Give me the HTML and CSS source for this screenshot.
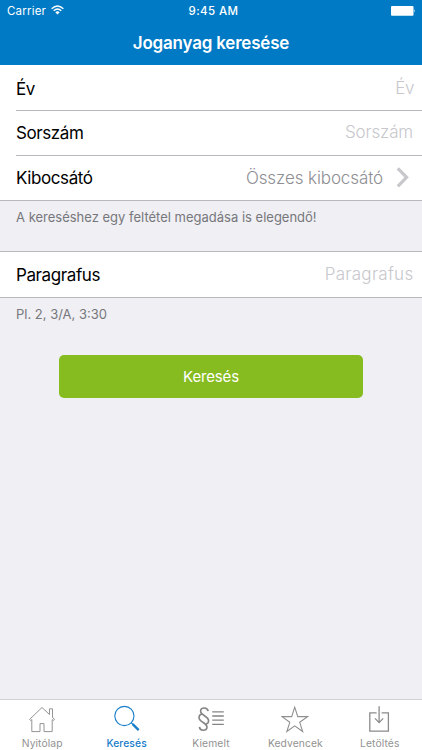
FILE: index.html
```html
<!DOCTYPE html>
<html lang="hu">
<head>
<meta charset="utf-8">
<title>Joganyag keresése</title>
<link rel="stylesheet" href="styles.css">
</head>
<body>
<header class="header">
  <div class="status">
    <div class="status-left">
      <span class="carrier">Carrier</span>
      <svg class="wifi" width="13" height="10" viewBox="0 0 13 10" fill="none" stroke="#fff" stroke-width="1.3"><path d="M.6 3.7Q6.5-1.8 12.4 3.7M2.7 5.8Q6.5 2.3 10.3 5.8"/><path d="M4.3 7.2Q6.5 5.4 8.7 7.2L6.5 9.5Z" fill="#fff" stroke="none"/></svg>
    </div>
    <span class="time">9:45 AM</span>
    <svg class="battery" width="25" height="10" viewBox="0 0 25 10" fill="#fff"><rect width="22.5" height="9.7" rx="1"/><path d="M23.2 3.2q1.5 1.6 0 3.2z"/></svg>
  </div>
  <h1 class="title">Joganyag keresése</h1>
</header>
<main class="form">
  <section class="group">
    <div class="row"><span class="label">Év</span><span class="placeholder ev-value">Év</span></div>
    <div class="row"><span class="label">Sorszám</span><span class="placeholder sor-value">Sorszám</span></div>
    <div class="row"><span class="label">Kibocsátó</span><span class="value">Összes kibocsátó</span><svg class="chevron" width="14" height="21" viewBox="0 0 14 21" fill="none" stroke="#c7c7cc" stroke-width="3.2"><path d="M1.8 1.3 10.6 10.3 1.8 19.3"/></svg></div>
  </section>
  <p class="note">A kereséshez egy feltétel megadása is elegendő!</p>
  <section class="group single">
    <div class="row"><span class="label">Paragrafus</span><span class="placeholder par-value">Paragrafus</span></div>
  </section>
  <p class="note example">Pl. 2, 3/A, 3:30</p>
  <button class="search">Keresés</button>
</main>
<nav class="tabs">
  <div class="tab"><svg width="28" height="28" viewBox="0 0 28 28" fill="none" stroke="#949494" stroke-width="1"><path d="M1.5 14.5 14 2.5l7.5 7V3.8h3v8.3l2 2.4-1.3 1-1-.9v12H16v-8h-4v8H3.8v-12l-1 .9z"/></svg><span>Nyitólap</span></div>
  <div class="tab active"><svg width="28" height="28" viewBox="0 0 28 28" fill="none" stroke="#167dca"><circle cx="11.4" cy="11" r="9.6" stroke-width="1.1"/><path d="m18.2 17.7 2 2" stroke-width="1.2"/><path d="m19.7 19.1 6 6" stroke-width="2.3"/></svg><span>Keresés</span></div>
  <div class="tab"><svg width="28" height="28" viewBox="0 0 28 28" fill="none" stroke="#858585"><path d="M11.2 6.2C10.8 4 9.3 3 7.3 3 5 3 3.6 4.4 3.6 6.2c0 4.3 8 4.8 8 9.6 0 1.8-1.1 3-2.8 3.4M2.4 22c.4 2.2 1.9 3.2 3.9 3.2 2.3 0 3.7-1.4 3.7-3.2 0-4.3-8-4.8-8-9.6 0-1.8 1.1-3 2.8-3.4" stroke-width="1.6"/><path d="M15.2 6.8h11.6M15.2 11h11.6M15.2 15.2h11.6M15.2 19.4h11.6" stroke-width="1.3"/></svg><span>Kiemelt</span></div>
  <div class="tab"><svg width="28" height="28" viewBox="0 0 28 28" fill="none" stroke="#8f8f8f" stroke-width="1.1"><path d="m13.7 2.2 3.1 9.4h9.7l-7.8 5.7 3 9.2-8-5.6-7.9 5.6 3-9.2L1 11.6h9.7z"/></svg><span>Kedvencek</span></div>
  <div class="tab"><svg width="28" height="28" viewBox="0 0 28 28" fill="none" stroke="#8b8b8b" stroke-width="1.3"><path d="M10.6 7.8H3.8v18.4h18.6V7.8h-6.8M13.1 1.2v16.3M9 13.4l4.1 4.2 4.1-4.2"/></svg><span>Letöltés</span></div>
</nav>
</body>
</html>
```
FILE: styles.css
```css
* { box-sizing: border-box; }
body {
  margin: 0;
  height: 750px;
  display: flex;
  flex-direction: column;
  background: #efeff4;
  font-family: Inter, "Liberation Sans", sans-serif;
  overflow: hidden;
}
.header { height: 65px; background: #007ac5; color: #fff; }
.status {
  display: grid;
  grid-template-columns: 1fr auto 1fr;
  align-items: center;
  height: 22px;
  padding: 0 6px 0 7px;
  font-size: 11.5px;
}
.status-left { display: flex; align-items: center; gap: 5px; }
.carrier { letter-spacing: .2px; }
.wifi { margin-top: -2px; }
.time { font-weight: 500; letter-spacing: .4px; position: relative; left: 2px; }
.battery { justify-self: end; }
.title {
  margin: 0;
  text-align: center;
  font-size: 17px;
  line-height: 43px;
  font-weight: 600;
  letter-spacing: -.2px;
}
.form { flex: 1; display: flex; flex-direction: column; }
.group { background: #fff; border-bottom: 1px solid #b8b8bc; padding-left: 16px; }
.row {
  height: 45px;
  display: flex;
  align-items: center;
  padding: 1px 9px 0 0;
  font-size: 17px;
}
.row:first-child { padding-top: 2px; }
.row + .row { border-top: 1px solid #b8b8bc; padding-top: 0; }
.label { flex: 1; color: #000; letter-spacing: -.4px; }
.placeholder { color: #c7c7cc; position: relative; top: -1px; font-weight: 300; }
.ev-value { letter-spacing: -.4px; margin-right: -1px; }
.sor-value { letter-spacing: -.15px; }
.par-value { letter-spacing: .3px; margin-right: -.5px; }
.single .row { padding-top: 1px; }
.value { color: #8e8e93; font-weight: 300; letter-spacing: -.1px; }
.chevron { margin-left: 13px; margin-right: 3px; margin-top: -1px; }
.note { margin: 0; height: 50px; padding: 6px 16px; font-size: 13px; line-height: 20px; color: #77777b; }
.single { border-top: 1px solid #b8b8bc; }
.example { height: 57px; }
.search {
  width: 304px;
  height: 43px;
  margin-left: 59px;
  border: 0;
  border-radius: 5px;
  background: #86bc20;
  color: #fff;
  font: 400 15px Inter, "Liberation Sans", sans-serif;
  letter-spacing: -.15px;
}
.tabs {
  height: 51px;
  display: grid;
  grid-template-columns: repeat(5, 1fr);
  background: #fff;
  border-top: 1px solid #d0d0d3;
}
.tab {
  display: flex;
  flex-direction: column;
  align-items: center;
  padding-top: 5px;
  font-size: 10.3px;
  line-height: 20px;
  color: #929292;
}
.tab svg { flex: none; }
.tab span { letter-spacing: .1px; }
.active { color: #167dca; font-weight: 500; }
```
